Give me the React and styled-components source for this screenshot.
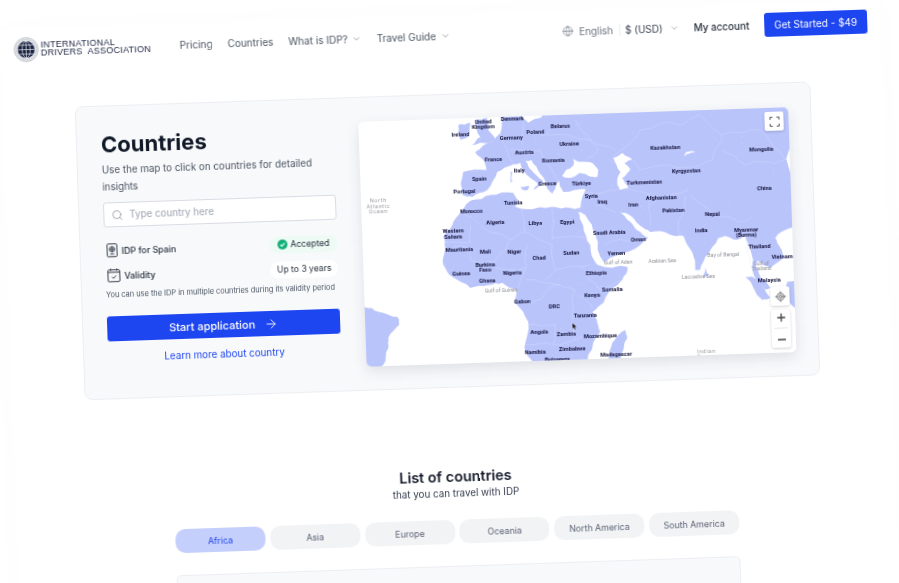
import React from 'react';
import styled, { createGlobalStyle } from 'styled-components';
import { ArrowRight, ChevronDown, Globe, LocateFixed, Minus, Plus, Search } from 'lucide-react';

const GlobalStyle = createGlobalStyle`
  html, body {
    margin: 0;
    height: 100%;
    overflow: hidden;
    background: #fff;
  }
  body {
    font-family: Inter, "Liberation Sans", sans-serif;
    color: #111827;
  }
`;

const Viewport = styled.div`
  width: 899px;
  height: 583px;
  overflow: hidden;
`;

const Page = styled.div`
  width: 880px;
  height: 600px;
  background: #fff;
  box-shadow: 0 0 30px rgba(30, 40, 80, 0.015);
  transform: translate(0, 30px) rotate(-1.95deg);
  transform-origin: 0 0;
  will-change: transform;
`;

const Header = styled.header`
  height: 41px;
  padding: 0 13px;
  display: flex;
  align-items: center;
  box-sizing: border-box;
`;

const Logo = styled.div`
  display: flex;
  align-items: center;
  gap: 2px;
  width: 166px;
`;

const LogoText = styled.div`
  font-family: "Liberation Sans", Arial, sans-serif;
  font-size: 9px;
  line-height: 7.5px;
  letter-spacing: 0.25px;
  color: #1b2440;
  white-space: nowrap;
`;

const Nav = styled.nav`
  display: flex;
  align-items: center;
  gap: 15px;
  margin-top: 1px;
`;

const NavLink = styled.span`
  display: inline-flex;
  align-items: center;
  gap: 4px;
  font-size: 10px;
  color: #4b5563;
  white-space: nowrap;
`;

const HeaderRight = styled.div`
  margin-left: auto;
  display: flex;
  align-items: center;
`;

const Locale = styled.span`
  display: inline-flex;
  align-items: center;
  font-size: 10px;
  color: #6b7280;
  gap: 6px;
`;

const Currency = styled.span`
  display: inline-flex;
  align-items: center;
  gap: 7px;
  font-size: 10px;
  color: #374151;
  border-left: 1px solid #eceef1;
  margin-left: 6px;
  padding-left: 5px;
`;

const Account = styled.span`
  font-size: 9.9px;
  font-weight: 500;
  color: #1f2937;
  margin: 0 15px 0 14px;
`;

const GetStarted = styled.button`
  width: 103px;
  height: 24px;
  border: 0;
  border-radius: 3px;
  background: #1d45f0;
  color: #fff;
  font: 400 10px Inter, sans-serif;
`;

const Card = styled.section`
  margin: 38px 0 0 72px;
  width: 736px;
  height: 294px;
  padding: 24px;
  box-sizing: border-box;
  display: flex;
  gap: 25px;
  background: #f8f9fb;
  border: 1px solid #eceef2;
  border-radius: 8px;
`;

const Side = styled.div`
  width: 233px;
  flex: none;
  display: flex;
  flex-direction: column;
`;

const Title = styled.h1`
  margin: 0;
  font-size: 22px;
  line-height: 28px;
  font-weight: 700;
  color: #111827;
`;

const Lead = styled.p`
  margin: 3px 0 0;
  font-size: 9.8px;
  line-height: 17px;
  color: #4b5563;
`;

const SearchBox = styled.div`
  margin-top: 7px;
  height: 25px;
  box-sizing: border-box;
  display: flex;
  align-items: center;
  gap: 6px;
  padding: 0 7px;
  background: #fff;
  border: 1px solid #d9dce3;
  border-radius: 3px;
  font-size: 9.8px;
  color: #9ca3af;
`;

const InfoRow = styled.div`
  display: flex;
  align-items: center;
  justify-content: space-between;
  height: 18px;
  margin-top: ${(p) => p.$top}px;
  padding-left: 2px;
`;

const InfoLabel = styled.span`
  display: inline-flex;
  align-items: center;
  gap: 4px;
  font-size: 8.8px;
  font-weight: 500;
  color: #1f2937;
`;

const Pill = styled.span`
  display: inline-flex;
  align-items: center;
  justify-content: center;
  gap: 3px;
  width: 68px;
  height: 17px;
  border-radius: 9px;
  background: ${(p) => p.$bg};
  font-size: 8.6px;
  color: #1f2937;
`;

const Note = styled.p`
  margin: 5px 0 0;
  font-size: 7.4px;
  line-height: 12px;
  color: #4b5563;
  white-space: nowrap;
`;

const StartButton = styled.button`
  margin-top: 15px;
  height: 25px;
  border: 0;
  border-radius: 3px;
  background: #1d45f0;
  color: #fff;
  display: flex;
  align-items: center;
  justify-content: center;
  gap: 9px;
  font: 500 11px Inter, sans-serif;
`;

const LearnMore = styled.a`
  margin-top: 10px;
  text-align: center;
  font-size: 9.8px;
  line-height: 14px;
  color: #1d45f0;
`;

const MapFrame = styled.div`
  position: relative;
  flex: none;
  width: 430px;
  height: 245px;
  background: #fff;
  border-radius: 5px;
  overflow: hidden;
  box-shadow: 0 5px 14px rgba(40, 50, 80, 0.12);
`;

const MapButton = styled.div`
  position: absolute;
  right: 5px;
  top: ${(p) => (p.$top != null ? `${p.$top}px` : 'auto')};
  bottom: ${(p) => (p.$bottom != null ? `${p.$bottom}px` : 'auto')};
  width: 19px;
  height: ${(p) => p.$h || 19}px;
  display: flex;
  flex-direction: column;
  align-items: center;
  justify-content: space-around;
  background: #fff;
  border-radius: 2px;
  box-shadow: 0 1px 3px rgba(0, 0, 0, 0.18);
  color: #444;
`;

const ZoomRule = styled.i`
  width: 13px;
  height: 1px;
  background: #e6e6e6;
`;

const ListHead = styled.div`
  margin-top: 79px;
  text-align: center;
`;

const ListTitle = styled.h2`
  margin: 0;
  font-size: 14.4px;
  line-height: 20px;
  font-weight: 600;
  color: #111827;
`;

const ListSub = styled.p`
  margin: 0;
  font-size: 9.8px;
  line-height: 14px;
  color: #374151;
`;

const Tabs = styled.div`
  margin: 19px 0 0 158px;
  width: 564px;
  display: flex;
  justify-content: space-between;
`;

const Tab = styled.span`
  width: 90px;
  height: 24px;
  border-radius: 10px;
  display: flex;
  align-items: center;
  justify-content: center;
  font-size: 8.8px;
  background: ${(p) => (p.$active ? '#c5cffb' : '#f2f3f5')};
  color: ${(p) => (p.$active ? '#1d45f0' : '#5a6275')};
`;

const ListCard = styled.div`
  margin: 22px 0 0 158px;
  width: 564px;
  height: 40px;
  box-sizing: border-box;
  background: #f8f9fb;
  border: 1px solid #eceef2;
  border-radius: 5px;
`;

// map shapes below were read off the tilted screenshot, so undo the page tilt here
const COS = Math.cos((1.95 * Math.PI) / 180);
const SIN = Math.sin((1.95 * Math.PI) / 180);
const toMap = ([x, y]) => [
  +(x * COS - (y - 30) * SIN - 354.7).toFixed(1),
  +(x * SIN + (y - 30) * COS - 104.1).toFixed(1),
];

const noise = (n) => {
  const v = Math.sin(n * 127.1) * 43758.5453;
  return v - Math.floor(v);
};

// hand traced outlines are too straight, break them up a little
const rough = (list, closed) => {
  let out = list;
  for (let pass = 0; pass < 2; pass++) {
    const next = [];
    const last = closed ? out.length : out.length - 1;
    for (let i = 0; i < last; i++) {
      const a = out[i];
      const b = out[(i + 1) % out.length];
      const dx = b[0] - a[0];
      const dy = b[1] - a[1];
      const k = (noise(a[0] * 3.1 + a[1] * 7.7 + pass) - 0.5) * 0.22;
      next.push(a, [a[0] + dx / 2 - dy * k, a[1] + dy / 2 + dx * k]);
    }
    if (!closed) next.push(out[out.length - 1]);
    out = next;
  }
  return out;
};

const pts = (list, closed = true) => rough(list, closed).map((p) => toMap(p).join(',')).join(' ');

const LAND = [
  [
    [500, 100], [502, 119], [500, 133], [492, 142], [475, 152], [483, 160], [486, 170], [463, 172], [462, 195],
    [472, 197], [487, 190], [497, 172], [512, 165], [520, 163], [530, 178], [538, 184], [533, 190], [543, 181],
    [531, 170], [525, 161], [531, 160], [540, 174], [547, 189], [552, 194], [556, 185], [558, 180], [563, 192],
    [585, 189], [582, 197], [580, 208], [570, 208], [552, 207], [537, 208], [515, 207], [518, 200], [513, 193],
    [490, 195], [472, 200], [462, 210], [452, 225], [443, 237], [445, 248], [443, 265], [452, 277], [470, 288],
    [488, 285], [502, 283], [517, 290], [515, 303], [528, 322], [524, 348], [532, 361], [530, 380], [590, 380],
    [588, 355], [600, 332], [597, 323], [592, 312], [603, 303], [622, 280], [627, 267], [597, 265], [590, 245],
    [583, 226], [578, 212], [585, 215], [595, 235], [604, 263], [630, 251], [648, 238], [640, 232], [632, 224],
    [622, 214], [618, 212], [625, 213], [640, 226], [650, 232], [670, 235], [683, 236], [695, 270], [700, 270],
    [705, 257], [718, 238], [725, 236], [735, 240], [745, 236], [750, 250], [752, 270], [765, 290], [770, 288],
    [755, 265], [757, 261], [770, 268], [783, 258], [780, 248], [775, 238], [790, 228], [800, 228], [800, 90],
    [500, 90],
  ],
  [[458, 125], [470, 123], [468, 137], [460, 140], [458, 133]],
  [[475, 120], [487, 118], [488, 130], [495, 140], [488, 143], [472, 145], [480, 137]],
  [[510, 172], [512, 172], [512, 182], [510, 182]],
  [[520, 187], [529, 186], [528, 190], [522, 190]],
  [[745, 277], [752, 277], [770, 298], [762, 300]],
  [[787, 282], [800, 280], [800, 310], [785, 300]],
  [[705, 267], [708, 277], [703, 277]],
  [[625, 330], [627, 338], [620, 360], [608, 360], [612, 343]],
  [[355, 305], [364, 307], [378, 312], [397, 317], [399, 325], [388, 338], [388, 348], [383, 365], [368, 368], [355, 368]],
];

const SEAS = [
  [[562, 176], [566, 170], [573, 166], [573, 159], [580, 162], [592, 163], [598, 170], [597, 177], [588, 176], [580, 173], [570, 178]],
  [[613, 158], [622, 153], [632, 160], [624, 163], [630, 170], [622, 178], [628, 188], [620, 190], [617, 184], [620, 172]],
  [[522, 118], [528, 123], [542, 117], [538, 110], [520, 110]],
  [[683, 156], [686, 152], [695, 152], [687, 154]],
];

const BORDERS = [
  [[464, 215], [490, 232], [510, 240], [525, 232], [520, 207]],
  [[552, 207], [552, 240]],
  [[525, 232], [552, 245]],
  [[552, 238], [585, 238]],
  [[443, 243], [470, 243], [470, 225]],
  [[528, 245], [526, 268]],
  [[495, 268], [525, 268], [517, 290]],
  [[452, 247], [470, 248], [470, 260], [495, 262], [505, 250], [510, 240]],
  [[552, 245], [555, 270], [545, 280]],
  [[555, 270], [590, 265]],
  [[525, 280], [560, 285]],
  [[525, 303], [540, 300], [555, 285], [575, 290], [572, 315], [575, 340]],
  [[527, 325], [555, 325], [553, 345], [525, 345]],
  [[553, 345], [575, 340], [585, 335]],
  [[577, 295], [595, 310]],
  [[580, 265], [600, 290], [622, 280]],
  [[470, 172], [487, 170]],
  [[500, 133], [508, 155], [512, 165]],
  [[523, 122], [522, 145]],
  [[540, 135], [590, 140], [598, 150], [585, 160]],
  [[510, 150], [540, 150], [552, 170], [558, 180]],
  [[575, 120], [590, 140], [615, 150]],
  [[612, 158], [640, 130], [680, 125], [700, 115], [722, 135], [712, 160], [688, 168], [665, 165], [640, 170], [632, 160]],
  [[722, 135], [760, 130], [785, 160], [745, 165], [722, 150]],
  [[690, 195], [715, 215], [745, 222], [752, 215]],
  [[625, 190], [650, 195], [650, 225]],
  [[650, 205], [670, 195], [688, 190]],
  [[685, 195], [678, 220], [680, 238]],
  [[582, 192], [610, 190], [625, 190]],
  [[595, 205], [615, 213]],
  [[605, 245], [635, 240]],
  [[745, 240], [750, 265]],
];

const COUNTRIES = [
  ['United', 483, 122], ['Kingdom', 483, 127], ['Ireland', 460, 134], ['Denmark', 512, 119], ['Poland', 535, 132],
  ['Belarus', 560, 126], ['Germany', 511, 138], ['Ukraine', 569, 144], ['Austria', 524, 152], ['Romania', 553, 160],
  ['France', 493, 159], ['Italy', 519, 170], ['Spain', 479, 179], ['Portugal', 464, 191], ['Greece', 547, 184],
  ['Türkiye', 581, 183], ['Tunisia', 513, 203], ['Morocco', 471, 211], ['Algeria', 495, 222], ['Libya', 535, 223],
  ['Egypt', 567, 222], ['Western', 453, 231], ['Sahara', 453, 237], ['Kazakhstan', 665, 147], ['Mongolia', 761, 149],
  ['Kyrgyzstan', 686, 171], ['China', 764, 188], ['Turkmenistan', 644, 182], ['Syria', 591, 196], ['Iraq', 602, 202],
  ['Iran', 633, 205], ['Afghanistan', 661, 198], ['Pakistan', 673, 210], ['Nepal', 712, 214], ['India', 701, 230],
  ['Myanmar', 746, 230], ['(Burma)', 746, 235], ['Saudi Arabia', 609, 232], ['Oman', 638, 239], ['Mauritania', 459, 250],
  ['Mali', 485, 252], ['Niger', 514, 252], ['Sudan', 571, 253], ['Chad', 539, 258], ['Burkina', 485, 265], ['Faso', 485, 270],
  ['Nigeria', 512, 273], ['Guinea', 461, 274], ['Ghana', 487, 281], ['Gabon', 522, 301], ['DRC', 554, 306],
  ['Tanzania', 585, 315], ['Angola', 539, 332], ['Zambia', 566, 334], ['Namibia', 535, 352], ['Zimbabwe', 572, 349],
  ['Botswana', 557, 359], ['Yemen', 616, 253], ['Ethiopia', 596, 273], ['Somalia', 612, 289], ['Kenya', 592, 295],
  ['Mozambique', 600, 336], ['Madagascar', 616, 354], ['Thailand', 759, 246], ['Vietnam', 782, 257], ['Malaysia', 769, 280],
];

const WATERS = [
  ['Gulf of Guinea', 501, 290], ['Gulf of Aden', 618, 262], ['Arabian Sea', 662, 261], ['Bay of Bengal', 723, 255],
  ['Laccadive Sea', 698, 276], ['Gulf of', 761, 263], ['Thailand', 761, 268],
];

const OCEANS = [
  ['North', 378, 200], ['Atlantic', 378, 206], ['Ocean', 378, 211], ['Indian', 706, 351], ['Ocean', 706, 356],
];

const SPECKS = Array.from({ length: 320 }, (_, i) => [noise(i + 0.5) * 430, noise(i + 900.5) * 245]);

const MapLabel = styled.text`
  font-family: Roboto, sans-serif;
  font-size: ${(p) => p.$size}px;
  font-weight: ${(p) => p.$weight};
  letter-spacing: ${(p) => p.$spacing || 0}px;
  fill: ${(p) => p.$fill};
  text-anchor: middle;
  dominant-baseline: central;
`;

const WorldMap = () => {
  const [cx, cy] = toMap([572, 323]);
  return (
    <svg width="430" height="245" viewBox="0 0 430 245">
      {LAND.map((l, i) => <polygon key={i} points={pts(l)} fill="#b9c4fb" />)}
      {SEAS.map((l, i) => <polygon key={i} points={pts(l)} fill="#fff" />)}
      {BORDERS.map((l, i) => (
        <polyline key={i} points={pts(l, false)} fill="none" stroke="#dfe4fe" strokeOpacity="0.65" strokeWidth="0.5" />
      ))}
      {SPECKS.map(([x, y], i) => <circle key={i} cx={x} cy={y} r="0.35" fill="#fff" fillOpacity="0.7" />)}
      {WATERS.map(([t, x, y], i) => {
        const [a, b] = toMap([x, y]);
        return <MapLabel key={i} x={a} y={b} $size={5.2} $weight={400} $fill="#8f9198">{t}</MapLabel>;
      })}
      {OCEANS.map(([t, x, y], i) => {
        const [a, b] = toMap([x, y]);
        return <MapLabel key={i} x={a} y={b} $size={5.6} $weight={400} $spacing={0.6} $fill="#9a9ca3">{t}</MapLabel>;
      })}
      {COUNTRIES.map(([t, x, y], i) => {
        const [a, b] = toMap([x, y]);
        return <MapLabel key={i} x={a} y={b} $size={5.7} $weight={700} $fill="#12123a">{t}</MapLabel>;
      })}
      <path d={`M${cx} ${cy}l0 6 1.4-1.3 1 2.3 1-.4-1-2.2 2-.1z`} fill="#111" stroke="#fff" strokeWidth="0.3" />
    </svg>
  );
};

const LogoMark = () => (
  <svg width="25" height="25" viewBox="0 0 25 25">
    <circle cx="12.5" cy="12.5" r="12" fill="#e4e6ea" stroke="#b8bcc6" strokeWidth="0.8" />
    <circle cx="12.5" cy="12.5" r="10" fill="none" stroke="#a9aeba" strokeWidth="0.8" strokeDasharray="1 1" />
    <circle cx="12.5" cy="12.5" r="8.4" fill="#18223f" />
    <g fill="none" stroke="#e8eaf0" strokeWidth="0.7">
      <ellipse cx="12.5" cy="12.5" rx="4" ry="8.4" />
      <path d="M12.5 4v17M4.2 12.5h16.6M5.5 8h14M5.5 17h14" />
    </g>
  </svg>
);

const PassportIcon = () => (
  <svg width="11" height="14" viewBox="0 0 11 14" fill="none" stroke="#1f2937" strokeWidth="0.9">
    <rect x="0.6" y="0.6" width="9.8" height="12.8" rx="1" />
    <circle cx="5.5" cy="6" r="2.6" />
    <path d="M2.9 6h5.2M5.5 3.4v5.2M3.5 10.8h4" />
  </svg>
);

const CalendarIcon = () => (
  <svg width="13" height="14" viewBox="0 0 13 14" fill="none" stroke="#1f2937" strokeWidth="0.9">
    <rect x="0.6" y="1.6" width="11.8" height="11.8" rx="1.2" />
    <path d="M0.6 4h11.8M3.5 0.4v2M9.5 0.4v2" />
    <path d="M4.5 8.6l1.5 1.5 2.8-2.8" />
  </svg>
);

const CheckBadge = () => (
  <svg width="10" height="10" viewBox="0 0 10 10">
    <circle cx="5" cy="5" r="5" fill="#12b076" />
    <path d="M2.8 5.1l1.5 1.5 2.9-3" fill="none" stroke="#fff" strokeWidth="1.1" />
  </svg>
);

const FullscreenIcon = () => (
  <svg width="10" height="10" viewBox="0 0 10 10" fill="none" stroke="#555" strokeWidth="1">
    <path d="M0.5 3V0.5H3M7 0.5h2.5V3M9.5 7v2.5H7M3 9.5H0.5V7" />
  </svg>
);

const TABS = ['Africa', 'Asia', 'Europe', 'Oceania', 'North America', 'South America'];

const App = () => (
  <Viewport>
    <GlobalStyle />
    <Page>
      <Header>
        <Logo>
          <LogoMark />
          <LogoText>
            INTERNATIONAL
            <br />
            DRIVERS&nbsp; ASSOCIATION
          </LogoText>
        </Logo>
        <Nav>
          <NavLink>Pricing</NavLink>
          <NavLink>Countries</NavLink>
          <NavLink>What is IDP? <ChevronDown size={10} strokeWidth={1.2} /></NavLink>
          <NavLink>Travel Guide <ChevronDown size={10} strokeWidth={1.2} /></NavLink>
        </Nav>
        <HeaderRight>
          <Locale><Globe size={11} strokeWidth={1.1} color="#4b5563" />English</Locale>
          <Currency>$ (USD) <ChevronDown size={10} strokeWidth={1.2} color="#6b7280" /></Currency>
          <Account>My account</Account>
          <GetStarted>Get Started - $49</GetStarted>
        </HeaderRight>
      </Header>

      <Card>
        <Side>
          <Title>Countries</Title>
          <Lead>Use the map to click on countries for detailed insights</Lead>
          <SearchBox><Search size={12} strokeWidth={1.2} color="#6b7280" />Type country here</SearchBox>
          <InfoRow $top={14}>
            <InfoLabel><PassportIcon />IDP for Spain</InfoLabel>
            <Pill $bg="#eefaf4"><CheckBadge />Accepted</Pill>
          </InfoRow>
          <InfoRow $top={7}>
            <InfoLabel><CalendarIcon />Validity</InfoLabel>
            <Pill $bg="#fff">Up to 3 years</Pill>
          </InfoRow>
          <Note>You can use the IDP in multiple countries during its validity period</Note>
          <StartButton>Start application <ArrowRight size={14} strokeWidth={1.5} /></StartButton>
          <LearnMore>Learn more about country</LearnMore>
        </Side>
        <MapFrame>
          <WorldMap />
          <MapButton $top={4}><FullscreenIcon /></MapButton>
          <MapButton $bottom={47}><LocateFixed size={12} strokeWidth={1.5} /></MapButton>
          <MapButton $bottom={5} $h={38}>
            <Plus size={12} strokeWidth={2.6} />
            <ZoomRule />
            <Minus size={12} strokeWidth={2.6} />
          </MapButton>
        </MapFrame>
      </Card>

      <ListHead>
        <ListTitle>List of countries</ListTitle>
        <ListSub>that you can travel with IDP</ListSub>
      </ListHead>
      <Tabs>
        {TABS.map((t, i) => <Tab key={t} $active={i === 0}>{t}</Tab>)}
      </Tabs>
      <ListCard />
    </Page>
  </Viewport>
);

export default App;
